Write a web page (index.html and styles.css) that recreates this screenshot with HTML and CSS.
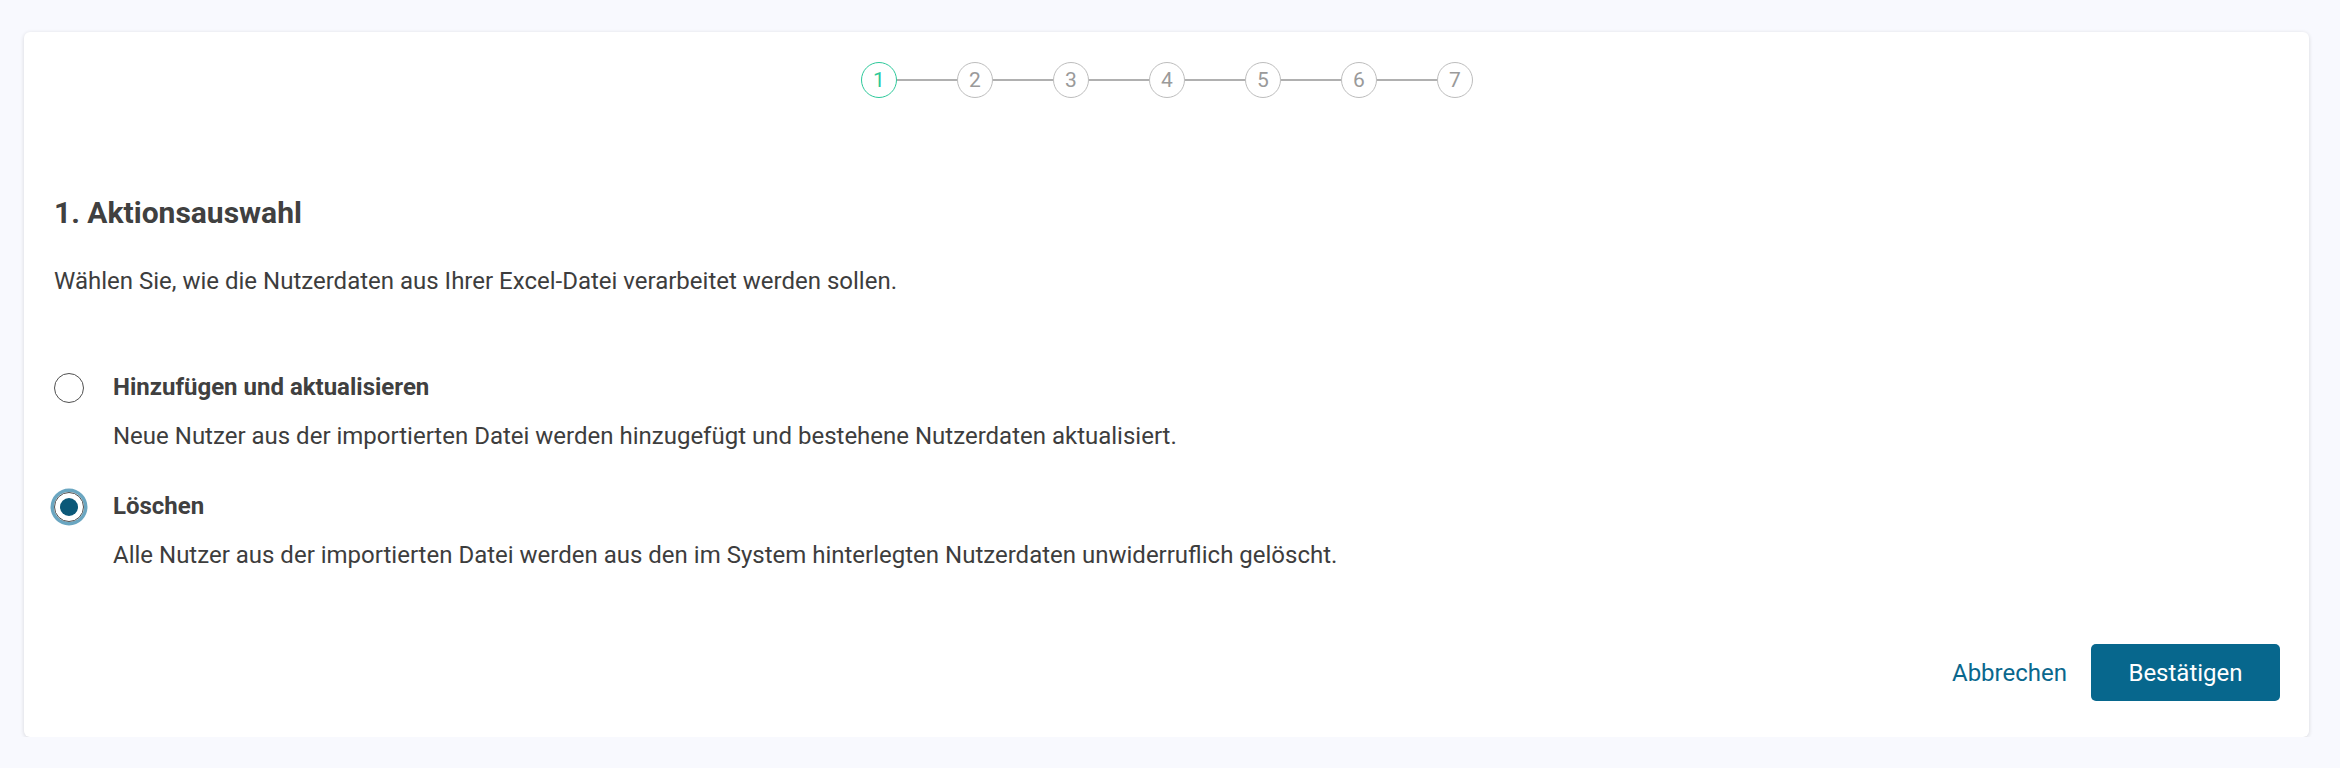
FILE: index.html
```html
<!DOCTYPE html>
<html lang="de">
<head>
<meta charset="utf-8">
<title>Aktionsauswahl</title>
<link rel="stylesheet" href="styles.css">
</head>
<body>
<div class="card">
  <ol class="stepper">
    <li class="step active">1</li>
    <li class="line"></li>
    <li class="step">2</li>
    <li class="line"></li>
    <li class="step">3</li>
    <li class="line"></li>
    <li class="step">4</li>
    <li class="line"></li>
    <li class="step">5</li>
    <li class="line"></li>
    <li class="step">6</li>
    <li class="line"></li>
    <li class="step">7</li>
  </ol>

  <h1 class="title">1. Aktionsauswahl</h1>
  <p class="intro">Wählen Sie, wie die Nutzerdaten aus Ihrer Excel-Datei verarbeitet werden sollen.</p>

  <div class="options">
    <div class="option">
      <span class="radio"></span>
      <div class="option-text">
        <div class="option-title">Hinzufügen und aktualisieren</div>
        <div class="option-desc">Neue Nutzer aus der importierten Datei werden hinzugefügt und bestehene Nutzerdaten aktualisiert.</div>
      </div>
    </div>
    <div class="option">
      <span class="radio checked"></span>
      <div class="option-text">
        <div class="option-title">Löschen</div>
        <div class="option-desc">Alle Nutzer aus der importierten Datei werden aus den im System hinterlegten Nutzerdaten unwiderruflich gelöscht.</div>
      </div>
    </div>
  </div>

  <div class="actions">
    <button class="btn-link">Abbrechen</button>
    <button class="btn-primary">Bestätigen</button>
  </div>
</div>
</body>
</html>
```

FILE: styles.css
```css
html, body {
  margin: 0;
  padding: 0;
  background: #f8f9fe;
}
body {
  padding: 32px 31px 0 24px;
  font-family: Roboto, "Liberation Sans", Arial, sans-serif;
  color: #3d3d3d;
}
.card {
  background: #ffffff;
  border-radius: 6px;
  box-shadow: 0 1px 4px rgba(0, 0, 0, 0.14);
  padding: 30px 29px 36px 30px;
  height: 705px;
  box-sizing: border-box;
}
.stepper {
  list-style: none;
  margin: 0;
  padding: 0;
  display: flex;
  justify-content: center;
  align-items: center;
  height: 36px;
}
.step {
  width: 36px;
  height: 36px;
  box-sizing: border-box;
  border: 1.5px solid #bdbdbd;
  border-radius: 50%;
  display: flex;
  align-items: center;
  justify-content: center;
  font-size: 21px;
  color: #9a9a9a;
}
.step.active {
  border-color: #2ec99b;
  color: #2ec99b;
}
.line {
  width: 60px;
  height: 1.5px;
  background: #b0b0b0;
}
.title {
  margin: 97px 0 0 0;
  font-size: 30px;
  line-height: 36px;
  font-weight: 700;
  color: #404040;
}
.intro {
  margin: 35px 0 0 0;
  font-size: 24px;
  line-height: 30px;
}
.options {
  margin-top: 76px;
  display: flex;
  flex-direction: column;
  gap: 40px;
}
.option {
  display: flex;
  align-items: flex-start;
  gap: 29px;
}
.radio {
  flex: none;
  width: 30px;
  height: 30px;
  box-sizing: border-box;
  border: 1.5px solid #505050;
  border-radius: 50%;
  margin-top: 1px;
  display: flex;
  align-items: center;
  justify-content: center;
}
.radio.checked {
  box-shadow: 0 0 0 3.5px #6aa6c1;
}
.radio.checked::after {
  content: "";
  width: 18px;
  height: 18px;
  border-radius: 50%;
  background: #0b5878;
}
.option-title {
  font-size: 24px;
  line-height: 30px;
  font-weight: 700;
  color: #404040;
}
.option-desc {
  margin-top: 19px;
  font-size: 24px;
  line-height: 30px;
}
.actions {
  margin-top: 74px;
  display: flex;
  justify-content: flex-end;
  align-items: center;
  gap: 24px;
}
.btn-link {
  background: none;
  border: none;
  padding: 0;
  font-family: inherit;
  font-size: 24px;
  color: #0a678d;
  cursor: pointer;
}
.btn-primary {
  width: 189px;
  height: 57px;
  background: #07678d;
  border: none;
  border-radius: 5px;
  color: #ffffff;
  font-family: inherit;
  font-size: 24px;
  cursor: pointer;
}
```
